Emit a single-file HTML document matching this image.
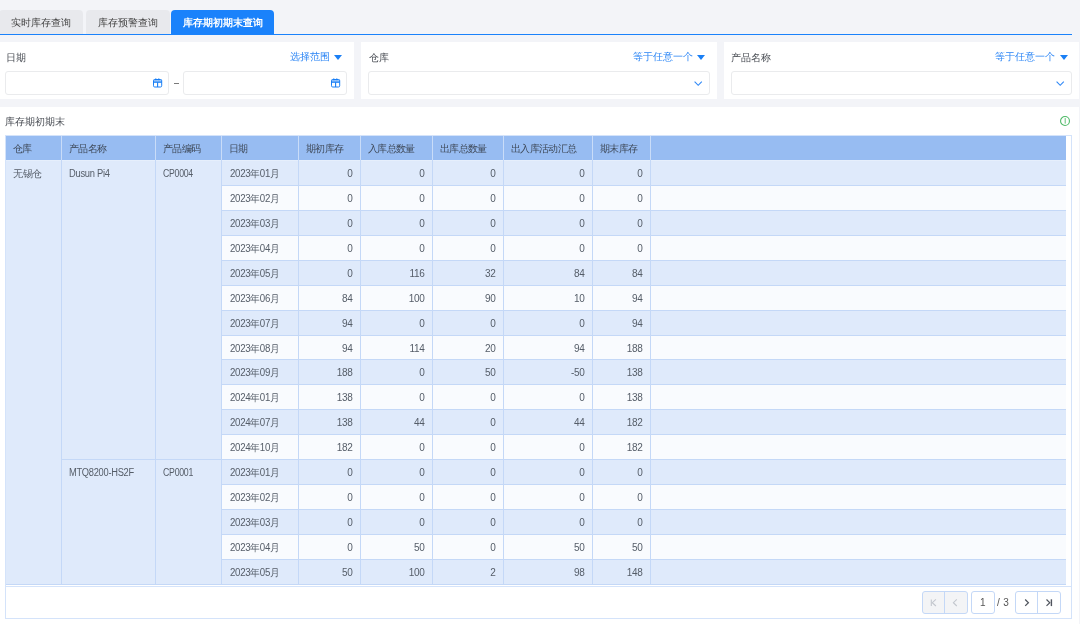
<!DOCTYPE html><html><head><meta charset="utf-8"><style>
*{box-sizing:border-box;margin:0;padding:0}
html,body{will-change:transform;width:1080px;height:624px;overflow:hidden;background:#f3f4f8;font-family:"Liberation Sans",sans-serif;font-size:10px;color:#333}
.a{position:absolute}
svg{display:block}
.tab{position:absolute;top:10px;height:24px;background:#e8e9ed;border-radius:4px 4px 0 0;color:#444;line-height:26px;text-align:center;font-size:10px}
.tab.on{background:#1a82fb;color:#fff;font-weight:bold}
.tabline{position:absolute;left:0;top:34px;width:1072px;height:1px;background:#1a82fb}
.panel{position:absolute;top:42px;height:57px;background:#fff}
.lbl{position:absolute;top:52px;font-size:10px;color:#474b52;line-height:12px}
.link{position:absolute;top:51px;font-size:10px;color:#2b85f5;line-height:12px}
.tri{position:absolute;top:55px;width:0;height:0;border-left:4px solid transparent;border-right:4px solid transparent;border-top:5px solid #1a7ff5}
.inp{position:absolute;top:71px;height:24px;border:1px solid #eaebed;border-radius:3px;background:#fff}
.cell{position:absolute;height:25px;line-height:26px;font-size:10px;letter-spacing:-0.3px;color:#555d68;white-space:nowrap}
</style></head><body>
<div class="tab" style="left:-1px;width:83.5px">实时库存查询</div>
<div class="tab" style="left:85.5px;width:84px">库存预警查询</div>
<div class="tab on" style="left:171px;width:103px">库存期初期末查询</div>
<div class="tabline"></div>
<div class="panel" style="left:0;width:354px"></div>
<div class="panel" style="left:361px;width:356px"></div>
<div class="panel" style="left:724px;width:355px"></div>
<div class="lbl" style="left:6px">日期</div>
<div class="link" style="left:290px">选择范围</div><div class="tri" style="left:334px"></div>
<div class="inp" style="left:5px;width:164px"></div><div class="a" style="left:153px;top:78px"><svg width="10" height="10" viewBox="0 0 10 10"><rect x="0.5" y="1.5" width="8.2" height="7.5" rx="1.2" fill="none" stroke="#1a7ff5" stroke-width="1"/><rect x="0.5" y="1.5" width="8.2" height="2.5" fill="#1a7ff5" fill-opacity="0.45"/><line x1="0.5" y1="4.2" x2="8.7" y2="4.2" stroke="#1a7ff5" stroke-width="1.2"/><line x1="4.6" y1="4.2" x2="4.6" y2="9" stroke="#1a7ff5" stroke-width="1.1"/><line x1="2.8" y1="0.3" x2="2.8" y2="2.2" stroke="#1a7ff5" stroke-width="0.9"/><line x1="5.8" y1="0.3" x2="5.8" y2="2.2" stroke="#1a7ff5" stroke-width="0.9"/></svg></div>
<div class="a" style="left:174px;top:83px;width:5px;height:1px;background:#7a7a7a"></div>
<div class="inp" style="left:183px;width:164px"></div><div class="a" style="left:331px;top:78px"><svg width="10" height="10" viewBox="0 0 10 10"><rect x="0.5" y="1.5" width="8.2" height="7.5" rx="1.2" fill="none" stroke="#1a7ff5" stroke-width="1"/><rect x="0.5" y="1.5" width="8.2" height="2.5" fill="#1a7ff5" fill-opacity="0.45"/><line x1="0.5" y1="4.2" x2="8.7" y2="4.2" stroke="#1a7ff5" stroke-width="1.2"/><line x1="4.6" y1="4.2" x2="4.6" y2="9" stroke="#1a7ff5" stroke-width="1.1"/><line x1="2.8" y1="0.3" x2="2.8" y2="2.2" stroke="#1a7ff5" stroke-width="0.9"/><line x1="5.8" y1="0.3" x2="5.8" y2="2.2" stroke="#1a7ff5" stroke-width="0.9"/></svg></div>
<div class="lbl" style="left:368.5px">仓库</div>
<div class="link" style="left:633px">等于任意一个</div><div class="tri" style="left:697px"></div>
<div class="inp" style="left:368px;width:342px"></div><div class="a" style="left:694px;top:80.5px"><svg width="9" height="6" viewBox="0 0 9 6"><polyline points="0.6,0.6 4.2,4.3 7.8,0.6" fill="none" stroke="#2f88f6" stroke-width="1.1"/></svg></div>
<div class="lbl" style="left:731px">产品名称</div>
<div class="link" style="left:995px">等于任意一个</div><div class="tri" style="left:1059.5px"></div>
<div class="inp" style="left:731px;width:341px"></div><div class="a" style="left:1056px;top:80.5px"><svg width="9" height="6" viewBox="0 0 9 6"><polyline points="0.6,0.6 4.2,4.3 7.8,0.6" fill="none" stroke="#2f88f6" stroke-width="1.1"/></svg></div>
<div class="a" style="left:0;top:107px;width:1079px;height:517px;background:#fff"></div>
<div class="a" style="left:5px;top:116px;font-size:10px;color:#474b52;line-height:12px">库存期初期末</div>
<div class="a" style="left:1060px;top:116px"><svg width="10" height="10" viewBox="0 0 10 10"><circle cx="5" cy="5" r="4.45" fill="none" stroke="#4fba68" stroke-width="1.1"/><line x1="5.2" y1="2.1" x2="5.2" y2="7.6" stroke="#4fba68" stroke-width="0.9"/></svg></div>
<div class="a" style="left:5px;top:135px;width:1067px;height:484px;border:1px solid #d4e3fa;background:#fff"></div>
<div class="a" style="left:6px;top:136px;width:1060px;height:24px;background:#97bcf2"></div>
<div class="cell" style="left:13px;top:137px;height:24px;line-height:24px;color:#3f4a5a;font-size:10px;letter-spacing:-0.7px">仓库</div>
<div class="a" style="left:61px;top:136px;width:1px;height:24px;background:#c9dcf8"></div>
<div class="cell" style="left:69px;top:137px;height:24px;line-height:24px;color:#3f4a5a;font-size:10px;letter-spacing:-0.7px">产品名称</div>
<div class="a" style="left:155px;top:136px;width:1px;height:24px;background:#c9dcf8"></div>
<div class="cell" style="left:163px;top:137px;height:24px;line-height:24px;color:#3f4a5a;font-size:10px;letter-spacing:-0.7px">产品编码</div>
<div class="a" style="left:221px;top:136px;width:1px;height:24px;background:#c9dcf8"></div>
<div class="cell" style="left:229px;top:137px;height:24px;line-height:24px;color:#3f4a5a;font-size:10px;letter-spacing:-0.7px">日期</div>
<div class="a" style="left:298px;top:136px;width:1px;height:24px;background:#c9dcf8"></div>
<div class="cell" style="left:306px;top:137px;height:24px;line-height:24px;color:#3f4a5a;font-size:10px;letter-spacing:-0.7px">期初库存</div>
<div class="a" style="left:360px;top:136px;width:1px;height:24px;background:#c9dcf8"></div>
<div class="cell" style="left:368px;top:137px;height:24px;line-height:24px;color:#3f4a5a;font-size:10px;letter-spacing:-0.7px">入库总数量</div>
<div class="a" style="left:432px;top:136px;width:1px;height:24px;background:#c9dcf8"></div>
<div class="cell" style="left:440px;top:137px;height:24px;line-height:24px;color:#3f4a5a;font-size:10px;letter-spacing:-0.7px">出库总数量</div>
<div class="a" style="left:503px;top:136px;width:1px;height:24px;background:#c9dcf8"></div>
<div class="cell" style="left:511px;top:137px;height:24px;line-height:24px;color:#3f4a5a;font-size:10px;letter-spacing:-0.7px">出入库活动汇总</div>
<div class="a" style="left:592px;top:136px;width:1px;height:24px;background:#c9dcf8"></div>
<div class="cell" style="left:600px;top:137px;height:24px;line-height:24px;color:#3f4a5a;font-size:10px;letter-spacing:-0.7px">期末库存</div>
<div class="a" style="left:650px;top:136px;width:1px;height:24px;background:#c9dcf8"></div>
<div class="a" style="left:221px;top:160px;width:845px;height:25px;background:#dfeafb;border-top:1px solid #e6effc"></div>
<div class="a" style="left:221px;top:185px;width:845px;height:25px;background:#f9fbfe;border-top:1px solid #c4d8f7"></div>
<div class="a" style="left:221px;top:210px;width:845px;height:25px;background:#dfeafb;border-top:1px solid #c4d8f7"></div>
<div class="a" style="left:221px;top:235px;width:845px;height:25px;background:#f9fbfe;border-top:1px solid #c4d8f7"></div>
<div class="a" style="left:221px;top:260px;width:845px;height:25px;background:#dfeafb;border-top:1px solid #c4d8f7"></div>
<div class="a" style="left:221px;top:285px;width:845px;height:25px;background:#f9fbfe;border-top:1px solid #c4d8f7"></div>
<div class="a" style="left:221px;top:310px;width:845px;height:25px;background:#dfeafb;border-top:1px solid #c4d8f7"></div>
<div class="a" style="left:221px;top:335px;width:845px;height:24px;background:#f9fbfe;border-top:1px solid #c4d8f7"></div>
<div class="a" style="left:221px;top:359px;width:845px;height:25px;background:#dfeafb;border-top:1px solid #c4d8f7"></div>
<div class="a" style="left:221px;top:384px;width:845px;height:25px;background:#f9fbfe;border-top:1px solid #c4d8f7"></div>
<div class="a" style="left:221px;top:409px;width:845px;height:25px;background:#dfeafb;border-top:1px solid #c4d8f7"></div>
<div class="a" style="left:221px;top:434px;width:845px;height:25px;background:#f9fbfe;border-top:1px solid #c4d8f7"></div>
<div class="a" style="left:221px;top:459px;width:845px;height:25px;background:#dfeafb;border-top:1px solid #c4d8f7"></div>
<div class="a" style="left:221px;top:484px;width:845px;height:25px;background:#f9fbfe;border-top:1px solid #c4d8f7"></div>
<div class="a" style="left:221px;top:509px;width:845px;height:25px;background:#dfeafb;border-top:1px solid #c4d8f7"></div>
<div class="a" style="left:221px;top:534px;width:845px;height:25px;background:#f9fbfe;border-top:1px solid #c4d8f7"></div>
<div class="a" style="left:221px;top:559px;width:845px;height:25px;background:#dfeafb;border-top:1px solid #c4d8f7"></div>
<div class="a" style="left:6px;top:160px;width:215px;height:424px;background:#dfeafb;border-top:1px solid #e6effc"></div>
<div class="a" style="left:61px;top:459px;width:160px;height:1px;background:#c4d8f7"></div>
<div class="a" style="left:6px;top:584px;width:1060px;height:1px;background:#c4d8f7"></div>
<div class="a" style="left:61px;top:160px;width:1px;height:425px;background:#c4d8f7"></div>
<div class="a" style="left:155px;top:160px;width:1px;height:425px;background:#c4d8f7"></div>
<div class="a" style="left:221px;top:160px;width:1px;height:425px;background:#c4d8f7"></div>
<div class="a" style="left:298px;top:160px;width:1px;height:425px;background:#c4d8f7"></div>
<div class="a" style="left:360px;top:160px;width:1px;height:425px;background:#c4d8f7"></div>
<div class="a" style="left:432px;top:160px;width:1px;height:425px;background:#c4d8f7"></div>
<div class="a" style="left:503px;top:160px;width:1px;height:425px;background:#c4d8f7"></div>
<div class="a" style="left:592px;top:160px;width:1px;height:425px;background:#c4d8f7"></div>
<div class="a" style="left:650px;top:160px;width:1px;height:425px;background:#c4d8f7"></div>
<div class="cell" style="left:13px;top:161px">无锡仓</div>
<div class="cell" style="left:69px;top:161px;transform:scaleX(0.935);transform-origin:0 0">Dusun Pi4</div>
<div class="cell" style="left:163px;top:161px;transform:scaleX(0.87);transform-origin:0 0">CP0004</div>
<div class="cell" style="left:69px;top:460px;transform:scaleX(0.93);transform-origin:0 0">MTQ8200-HS2F</div>
<div class="cell" style="left:163px;top:460px;transform:scaleX(0.875);transform-origin:0 0">CP0001</div>
<div class="cell" style="left:230px;top:161px;transform:scaleX(0.97);transform-origin:0 0">2023年01月</div>
<div class="cell" style="left:298px;width:54.6px;text-align:right;top:161px">0</div>
<div class="cell" style="left:360px;width:64.6px;text-align:right;top:161px">0</div>
<div class="cell" style="left:432px;width:63.6px;text-align:right;top:161px">0</div>
<div class="cell" style="left:503px;width:81.6px;text-align:right;top:161px">0</div>
<div class="cell" style="left:592px;width:50.6px;text-align:right;top:161px">0</div>
<div class="cell" style="left:230px;top:186px;transform:scaleX(0.97);transform-origin:0 0">2023年02月</div>
<div class="cell" style="left:298px;width:54.6px;text-align:right;top:186px">0</div>
<div class="cell" style="left:360px;width:64.6px;text-align:right;top:186px">0</div>
<div class="cell" style="left:432px;width:63.6px;text-align:right;top:186px">0</div>
<div class="cell" style="left:503px;width:81.6px;text-align:right;top:186px">0</div>
<div class="cell" style="left:592px;width:50.6px;text-align:right;top:186px">0</div>
<div class="cell" style="left:230px;top:211px;transform:scaleX(0.97);transform-origin:0 0">2023年03月</div>
<div class="cell" style="left:298px;width:54.6px;text-align:right;top:211px">0</div>
<div class="cell" style="left:360px;width:64.6px;text-align:right;top:211px">0</div>
<div class="cell" style="left:432px;width:63.6px;text-align:right;top:211px">0</div>
<div class="cell" style="left:503px;width:81.6px;text-align:right;top:211px">0</div>
<div class="cell" style="left:592px;width:50.6px;text-align:right;top:211px">0</div>
<div class="cell" style="left:230px;top:236px;transform:scaleX(0.97);transform-origin:0 0">2023年04月</div>
<div class="cell" style="left:298px;width:54.6px;text-align:right;top:236px">0</div>
<div class="cell" style="left:360px;width:64.6px;text-align:right;top:236px">0</div>
<div class="cell" style="left:432px;width:63.6px;text-align:right;top:236px">0</div>
<div class="cell" style="left:503px;width:81.6px;text-align:right;top:236px">0</div>
<div class="cell" style="left:592px;width:50.6px;text-align:right;top:236px">0</div>
<div class="cell" style="left:230px;top:261px;transform:scaleX(0.97);transform-origin:0 0">2023年05月</div>
<div class="cell" style="left:298px;width:54.6px;text-align:right;top:261px">0</div>
<div class="cell" style="left:360px;width:64.6px;text-align:right;top:261px">116</div>
<div class="cell" style="left:432px;width:63.6px;text-align:right;top:261px">32</div>
<div class="cell" style="left:503px;width:81.6px;text-align:right;top:261px">84</div>
<div class="cell" style="left:592px;width:50.6px;text-align:right;top:261px">84</div>
<div class="cell" style="left:230px;top:286px;transform:scaleX(0.97);transform-origin:0 0">2023年06月</div>
<div class="cell" style="left:298px;width:54.6px;text-align:right;top:286px">84</div>
<div class="cell" style="left:360px;width:64.6px;text-align:right;top:286px">100</div>
<div class="cell" style="left:432px;width:63.6px;text-align:right;top:286px">90</div>
<div class="cell" style="left:503px;width:81.6px;text-align:right;top:286px">10</div>
<div class="cell" style="left:592px;width:50.6px;text-align:right;top:286px">94</div>
<div class="cell" style="left:230px;top:311px;transform:scaleX(0.97);transform-origin:0 0">2023年07月</div>
<div class="cell" style="left:298px;width:54.6px;text-align:right;top:311px">94</div>
<div class="cell" style="left:360px;width:64.6px;text-align:right;top:311px">0</div>
<div class="cell" style="left:432px;width:63.6px;text-align:right;top:311px">0</div>
<div class="cell" style="left:503px;width:81.6px;text-align:right;top:311px">0</div>
<div class="cell" style="left:592px;width:50.6px;text-align:right;top:311px">94</div>
<div class="cell" style="left:230px;top:336px;transform:scaleX(0.97);transform-origin:0 0">2023年08月</div>
<div class="cell" style="left:298px;width:54.6px;text-align:right;top:336px">94</div>
<div class="cell" style="left:360px;width:64.6px;text-align:right;top:336px">114</div>
<div class="cell" style="left:432px;width:63.6px;text-align:right;top:336px">20</div>
<div class="cell" style="left:503px;width:81.6px;text-align:right;top:336px">94</div>
<div class="cell" style="left:592px;width:50.6px;text-align:right;top:336px">188</div>
<div class="cell" style="left:230px;top:360px;transform:scaleX(0.97);transform-origin:0 0">2023年09月</div>
<div class="cell" style="left:298px;width:54.6px;text-align:right;top:360px">188</div>
<div class="cell" style="left:360px;width:64.6px;text-align:right;top:360px">0</div>
<div class="cell" style="left:432px;width:63.6px;text-align:right;top:360px">50</div>
<div class="cell" style="left:503px;width:81.6px;text-align:right;top:360px">-50</div>
<div class="cell" style="left:592px;width:50.6px;text-align:right;top:360px">138</div>
<div class="cell" style="left:230px;top:385px;transform:scaleX(0.97);transform-origin:0 0">2024年01月</div>
<div class="cell" style="left:298px;width:54.6px;text-align:right;top:385px">138</div>
<div class="cell" style="left:360px;width:64.6px;text-align:right;top:385px">0</div>
<div class="cell" style="left:432px;width:63.6px;text-align:right;top:385px">0</div>
<div class="cell" style="left:503px;width:81.6px;text-align:right;top:385px">0</div>
<div class="cell" style="left:592px;width:50.6px;text-align:right;top:385px">138</div>
<div class="cell" style="left:230px;top:410px;transform:scaleX(0.97);transform-origin:0 0">2024年07月</div>
<div class="cell" style="left:298px;width:54.6px;text-align:right;top:410px">138</div>
<div class="cell" style="left:360px;width:64.6px;text-align:right;top:410px">44</div>
<div class="cell" style="left:432px;width:63.6px;text-align:right;top:410px">0</div>
<div class="cell" style="left:503px;width:81.6px;text-align:right;top:410px">44</div>
<div class="cell" style="left:592px;width:50.6px;text-align:right;top:410px">182</div>
<div class="cell" style="left:230px;top:435px;transform:scaleX(0.97);transform-origin:0 0">2024年10月</div>
<div class="cell" style="left:298px;width:54.6px;text-align:right;top:435px">182</div>
<div class="cell" style="left:360px;width:64.6px;text-align:right;top:435px">0</div>
<div class="cell" style="left:432px;width:63.6px;text-align:right;top:435px">0</div>
<div class="cell" style="left:503px;width:81.6px;text-align:right;top:435px">0</div>
<div class="cell" style="left:592px;width:50.6px;text-align:right;top:435px">182</div>
<div class="cell" style="left:230px;top:460px;transform:scaleX(0.97);transform-origin:0 0">2023年01月</div>
<div class="cell" style="left:298px;width:54.6px;text-align:right;top:460px">0</div>
<div class="cell" style="left:360px;width:64.6px;text-align:right;top:460px">0</div>
<div class="cell" style="left:432px;width:63.6px;text-align:right;top:460px">0</div>
<div class="cell" style="left:503px;width:81.6px;text-align:right;top:460px">0</div>
<div class="cell" style="left:592px;width:50.6px;text-align:right;top:460px">0</div>
<div class="cell" style="left:230px;top:485px;transform:scaleX(0.97);transform-origin:0 0">2023年02月</div>
<div class="cell" style="left:298px;width:54.6px;text-align:right;top:485px">0</div>
<div class="cell" style="left:360px;width:64.6px;text-align:right;top:485px">0</div>
<div class="cell" style="left:432px;width:63.6px;text-align:right;top:485px">0</div>
<div class="cell" style="left:503px;width:81.6px;text-align:right;top:485px">0</div>
<div class="cell" style="left:592px;width:50.6px;text-align:right;top:485px">0</div>
<div class="cell" style="left:230px;top:510px;transform:scaleX(0.97);transform-origin:0 0">2023年03月</div>
<div class="cell" style="left:298px;width:54.6px;text-align:right;top:510px">0</div>
<div class="cell" style="left:360px;width:64.6px;text-align:right;top:510px">0</div>
<div class="cell" style="left:432px;width:63.6px;text-align:right;top:510px">0</div>
<div class="cell" style="left:503px;width:81.6px;text-align:right;top:510px">0</div>
<div class="cell" style="left:592px;width:50.6px;text-align:right;top:510px">0</div>
<div class="cell" style="left:230px;top:535px;transform:scaleX(0.97);transform-origin:0 0">2023年04月</div>
<div class="cell" style="left:298px;width:54.6px;text-align:right;top:535px">0</div>
<div class="cell" style="left:360px;width:64.6px;text-align:right;top:535px">50</div>
<div class="cell" style="left:432px;width:63.6px;text-align:right;top:535px">0</div>
<div class="cell" style="left:503px;width:81.6px;text-align:right;top:535px">50</div>
<div class="cell" style="left:592px;width:50.6px;text-align:right;top:535px">50</div>
<div class="cell" style="left:230px;top:560px;transform:scaleX(0.97);transform-origin:0 0">2023年05月</div>
<div class="cell" style="left:298px;width:54.6px;text-align:right;top:560px">50</div>
<div class="cell" style="left:360px;width:64.6px;text-align:right;top:560px">100</div>
<div class="cell" style="left:432px;width:63.6px;text-align:right;top:560px">2</div>
<div class="cell" style="left:503px;width:81.6px;text-align:right;top:560px">98</div>
<div class="cell" style="left:592px;width:50.6px;text-align:right;top:560px">148</div>
<div class="a" style="left:6px;top:586px;width:1065px;height:1px;background:#d4e3fa"></div>

<div class="a" style="left:922px;top:591px;width:46px;height:23px;border:1px solid #c4d8f7;border-radius:3px;background:#f3f4f6"></div>
<div class="a" style="left:944px;top:592px;width:1px;height:21px;background:#c4d8f7"></div>
<div class="a" style="left:970.5px;top:591px;width:24.5px;height:23px;border:1px solid #c4d8f7;border-radius:3px;background:#fff"></div>
<div class="a" style="left:1015px;top:591px;width:46px;height:23px;border:1px solid #c4d8f7;border-radius:3px;background:#fff"></div>
<div class="a" style="left:1037px;top:592px;width:1px;height:21px;background:#c4d8f7"></div>

<div class="a" style="left:929px;top:598px"><svg width="10" height="10" viewBox="0 0 10 10"><line x1="2.3" y1="1.4" x2="2.3" y2="8" stroke="#c3c7ce" stroke-width="1.1"/><polyline points="6.9,1.4 3.3,4.7 6.9,8" fill="none" stroke="#c3c7ce" stroke-width="1.1"/></svg></div>
<div class="a" style="left:951px;top:598px"><svg width="10" height="10" viewBox="0 0 10 10"><polyline points="5.8,1.4 2.4,4.7 5.8,8" fill="none" stroke="#c3c7ce" stroke-width="1.1"/></svg></div>
<div class="a" style="left:970.5px;top:591px;width:24.5px;height:23px;line-height:23px;text-align:center;color:#555;font-size:10px">1</div>
<div class="a" style="left:997px;top:591px;height:23px;line-height:23px;color:#555;font-size:10px;letter-spacing:0.4px">/ 3</div>
<div class="a" style="left:1021px;top:598px"><svg width="10" height="10" viewBox="0 0 10 10"><polyline points="4.2,1.5 7.4,4.7 4.2,7.9" fill="none" stroke="#50555e" stroke-width="1.25"/></svg></div>
<div class="a" style="left:1043px;top:598px"><svg width="10" height="10" viewBox="0 0 10 10"><polyline points="3.5,1.5 6.8,4.7 3.5,7.9" fill="none" stroke="#50555e" stroke-width="1.2"/><line x1="8.4" y1="1.3" x2="8.4" y2="8.1" stroke="#50555e" stroke-width="1.4"/></svg></div>
</body></html>
